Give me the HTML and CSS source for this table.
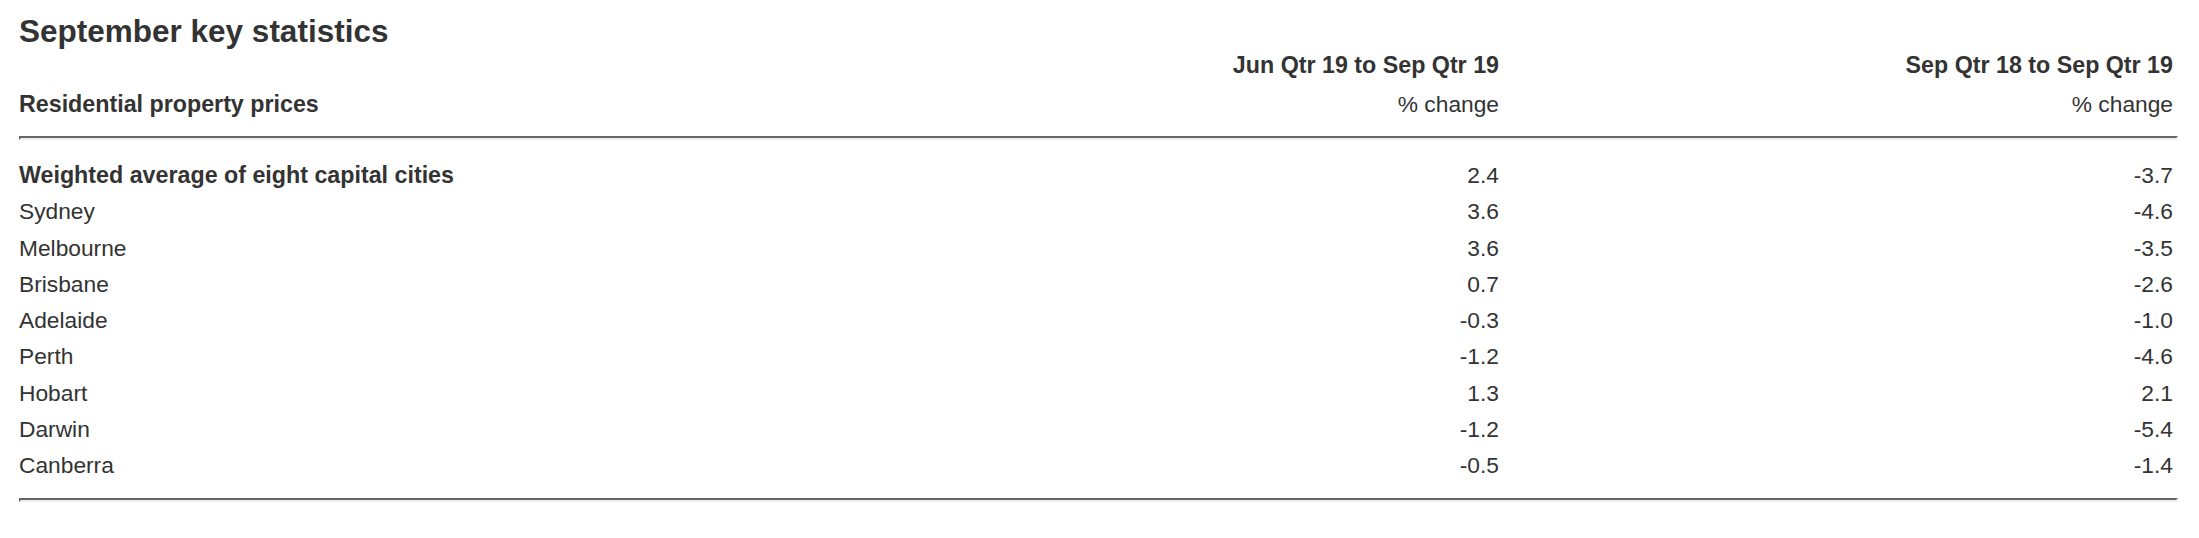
FILE: index.html
```html
<!DOCTYPE html>
<html lang="en">
<head>
<meta charset="utf-8">
<title>September key statistics</title>
<link rel="stylesheet" href="styles.css">
</head>
<body>
<div class="page">
  <h2 class="title">September key statistics</h2>
  <div class="stats">
    <div class="row head head-1">
      <div class="cell label"></div>
      <div class="cell num strong">Jun Qtr 19 to Sep Qtr 19</div>
      <div class="cell num strong">Sep Qtr 18 to Sep Qtr 19</div>
    </div>
    <div class="row head head-2">
      <div class="cell label strong">Residential property prices</div>
      <div class="cell num">% change</div>
      <div class="cell num">% change</div>
    </div>
    <hr class="rule rule-top">
    <div class="body">
      <div class="row">
        <div class="cell label strong">Weighted average of eight capital cities</div>
        <div class="cell num">2.4</div>
        <div class="cell num">-3.7</div>
      </div>
      <div class="row">
        <div class="cell label">Sydney</div>
        <div class="cell num">3.6</div>
        <div class="cell num">-4.6</div>
      </div>
      <div class="row">
        <div class="cell label">Melbourne</div>
        <div class="cell num">3.6</div>
        <div class="cell num">-3.5</div>
      </div>
      <div class="row">
        <div class="cell label">Brisbane</div>
        <div class="cell num">0.7</div>
        <div class="cell num">-2.6</div>
      </div>
      <div class="row">
        <div class="cell label">Adelaide</div>
        <div class="cell num">-0.3</div>
        <div class="cell num">-1.0</div>
      </div>
      <div class="row">
        <div class="cell label">Perth</div>
        <div class="cell num">-1.2</div>
        <div class="cell num">-4.6</div>
      </div>
      <div class="row">
        <div class="cell label">Hobart</div>
        <div class="cell num">1.3</div>
        <div class="cell num">2.1</div>
      </div>
      <div class="row">
        <div class="cell label">Darwin</div>
        <div class="cell num">-1.2</div>
        <div class="cell num">-5.4</div>
      </div>
      <div class="row">
        <div class="cell label">Canberra</div>
        <div class="cell num">-0.5</div>
        <div class="cell num">-1.4</div>
      </div>
    </div>
    <hr class="rule rule-bottom">
  </div>
</div>
</body>
</html>
```
FILE: styles.css
```css
html, body {
  margin: 0;
  padding: 0;
  background: #ffffff;
}

body {
  font-family: "Liberation Sans", Arial, sans-serif;
  color: #333333;
  font-size: 22.75px;
}

.page {
  padding: 0 21px 0 19px;
}

.title {
  margin: 14px 0 0 0;
  font-size: 31.5px;
  line-height: 34px;
  font-weight: bold;
  color: #333333;
}

.row {
  display: grid;
  grid-template-columns: 1fr 674px 674px;
  line-height: 36.25px;
}

.head-1 {
  line-height: 34px;
}

.head-2 {
  padding-top: 4px;
  line-height: 36px;
}

.cell {
  white-space: nowrap;
}

.num {
  text-align: right;
  padding-right: 5px;
}

.strong {
  font-weight: bold;
  font-size: 23.25px;
}

.rule {
  height: 0;
  margin: 0;
  border-style: solid;
  border-width: 2px;
  border-color: #666666 #eeeeee #eeeeee #666666;
}

.rule-top {
  margin-top: 14px;
}

.body {
  padding-top: 17px;
}

.rule-bottom {
  margin-top: 14.5px;
}
```
